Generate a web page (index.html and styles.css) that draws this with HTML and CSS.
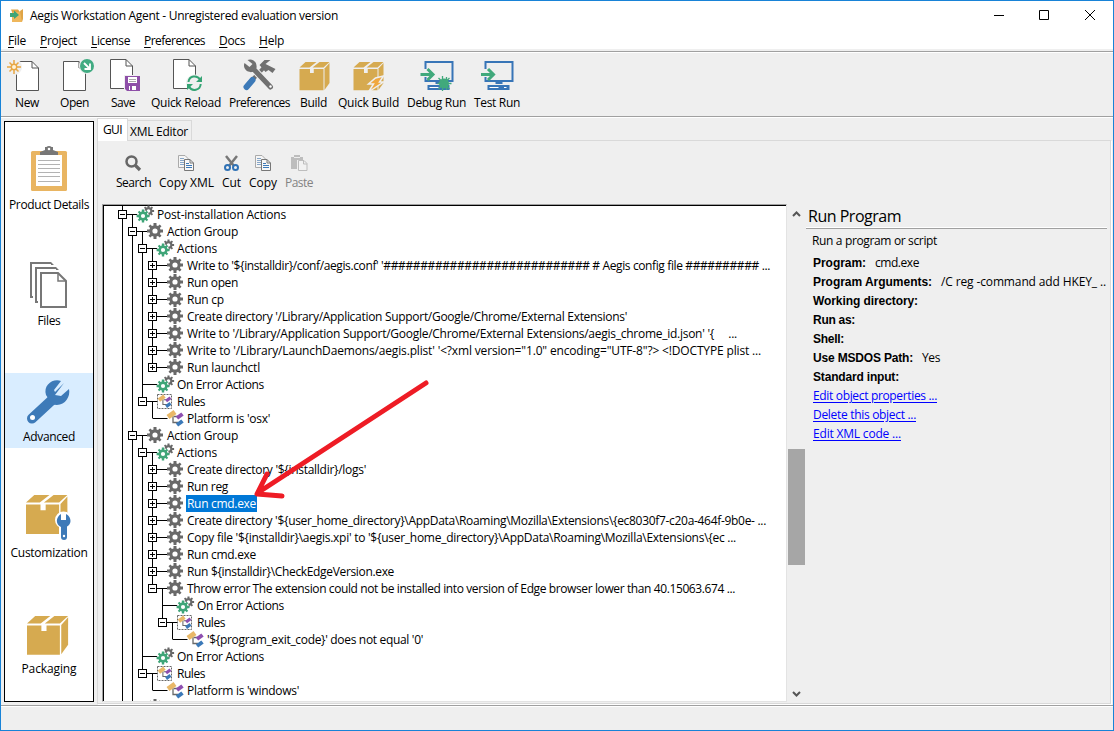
FILE: index.html
```html
<!DOCTYPE html>
<html lang="en">
<head>
<meta charset="utf-8">
<title>Aegis Workstation Agent</title>
<link rel="stylesheet" href="styles.css">
</head>
<body>
<svg class="defs" width="0" height="0">
  <defs>
    <g id="page"><path d="M.5 .5H16L22.500 7V29.500H.5Z" fill="#fff" stroke="#555"/><path d="M16 .5V7H22.500" fill="none" stroke="#555"/></g>
    <g id="box" fill="#d6aa50"><path d="M0 10H14V16H19V10H32V41H0Z" transform="scale(.75 .69)"/><path d="M0 5.500 6 0H17L10 5.500ZM13 5.500 20 0H30L24 5.500Z"/><path d="M25 6.500 30 1V21L25 28Z"/></g>
    <g id="gear" fill="#696969">
      <path fill-rule="evenodd" d="M-1.500 -8H1.500V-5.500L3 -4.900 4.700 -6.500 6.500 -4.700 4.900 -3 5.500 -1.500H8V1.500H5.500L4.900 3 6.500 4.700 4.700 6.500 3 4.900 1.500 5.500V8H-1.500V5.500L-3 4.900-4.700 6.500-6.500 4.700-4.900 3-5.500 1.500H-8V-1.500H-5.500L-4.900-3-6.500-4.700-4.700-6.500-3-4.900-1.500-5.500ZM2.600 0A2.600 2.600 0 1 0-2.600 0A2.600 2.600 0 1 0 2.600 0Z"/>
    </g>
    <g id="gear-green" fill="#3fa578">
      <path fill-rule="evenodd" d="M-1.500 -8H1.500V-5.500L3 -4.900 4.700 -6.500 6.500 -4.700 4.900 -3 5.500 -1.500H8V1.500H5.500L4.900 3 6.500 4.700 4.700 6.500 3 4.900 1.500 5.500V8H-1.500V5.500L-3 4.900-4.700 6.500-6.500 4.700-4.900 3-5.500 1.500H-8V-1.500H-5.500L-4.900-3-6.500-4.700-4.700-6.500-3-4.900-1.500-5.500ZM2.600 0A2.600 2.600 0 1 0-2.600 0A2.600 2.600 0 1 0 2.600 0Z"/>
    </g>
    <g id="gears"><use href="#gear" transform="translate(3.500 -3) scale(.7)"/><circle cx="-2" cy="2" r="6" fill="#fff"/><use href="#gear-green" transform="translate(-2 2) scale(.8)"/></g>
    <g id="rule"><path d="M-2 -2V4.500H3M-1 -1.500H3" fill="none" stroke="#696969" stroke-width="1.300"/><path d="M-7 -1 0 -6" stroke="#e9b868" stroke-width="5"/><path d="M2 0 7.500 -4" stroke="#8e4fb0" stroke-width="4"/><path d="M2 7 7.500 3" stroke="#3b79b8" stroke-width="4"/></g>
    <g id="rules"><rect x="-7.500" y="-6.500" width="14" height="14" fill="#fff" stroke="#666" stroke-dasharray="2 1"/><use href="#rule" transform="translate(-.5 0) scale(.8)"/></g>
    <g id="monitor"><path d="M1 8V1H28V20H1V16" fill="none" stroke="#3875b7" stroke-width="2"/><path d="M11 20H18V23H11ZM3 24H25V29H3Z" fill="#3875b7"/><path d="M5 26.500H14M19.500 26.500H22" stroke="#fff"/></g>
    <g id="run"><path d="M0 6.500H13M7 1 12.500 6.500 7 12" fill="none" stroke="#41a97c" stroke-width="3"/></g>
    <g id="wrench"><path d="M6 38.500 26 20" stroke="#3d7ab8" stroke-width="10" stroke-linecap="round"/><path d="M38 3 29 12 28 10 35 1C27-2 17 5 20 15L26 24C37 28 45 18 43 9L35 16 29 15Z" fill="#3d7ab8"/><circle cx="6.500" cy="37.500" r="2.500" fill="#fff"/></g>
    <g id="copy"><path d="M.5 .5H7L10.500 4V12.500H.5Z" fill="#f5f5f5" stroke="#aaa"/><path d="M2 3.500H6M2 5.500H8M2 7.500H6M2 9.500H6" stroke="#86a6c8"/><path d="M6.500 4.500H12L15.500 8V15.500H6.500Z" fill="#f8f8f8" stroke="#777"/><path d="M12 4.500V8H15.500" fill="none" stroke="#777"/><path d="M8 8.500H11M8 10.500H14M8 12.500H14" stroke="#3d7ab8"/></g>
  </defs>
</svg>

<div class="window">
  <header class="titlebar">
    <svg class="app-icon" width="16" height="16"><path d="M3 4H13V14H3Z" fill="#efb75c"/><path d="M2 1.500H9L11 4H3ZM11 3 14 1V11L13 14Z" fill="#dfa445"/><path d="M1 5H5V2.500L10 7 5 11V9H1Z" fill="#3fa578"/></svg>
    <span class="title" data-w="308">Aegis Workstation Agent - Unregistered evaluation version</span>
    <svg class="controls" width="104" height="12"><path d="M0 5.500H10M45.500 .5H54.500V9.500H45.500ZM91 0 101 10M101 0 91 10" fill="none" stroke="#000"/></svg>
  </header>
  <nav class="menubar">
    <span data-w="18"><u>F</u>ile</span><span data-w="37"><u>P</u>roject</span><span data-w="39"><u>L</u>icense</span><span data-w="61"><u>P</u>references</span><span data-w="26"><u>D</u>ocs</span><span data-w="25"><u>H</u>elp</span>
  </nav>

  <div class="toolbar">
    <div class="tool t-new"><svg viewBox="7 55 40 40"><use href="#page" x="16" y="61"/><g><circle cx="14" cy="67" r="8" fill="#efefef"/><path d="M14 60V74M7 67H21M9.500 62.500 18.500 71.500M18.500 62.500 9.500 71.500" stroke="#e8a743" stroke-width="1.500"/><circle cx="14" cy="67" r="2.700" fill="#fff3d8" stroke="#e8a743" stroke-width="1.400"/></g></svg><span data-w="24">New</span></div>
    <div class="tool t-open"><svg viewBox="54.500 55 40 40"><use href="#page" x="62.500" y="61"/><circle cx="86.500" cy="66" r="8" fill="#efefef"/><circle cx="86.500" cy="66" r="7" fill="#41ab82"/><path d="M83.500 63 88.500 68M89.500 63.500V69H84" fill="none" stroke="#fff" stroke-width="1.800"/></svg><span data-w="29">Open</span></div>
    <div class="tool t-save"><svg viewBox="103 55 40 40"><use href="#page" x="110" y="59"/><path d="M124 75H141V92H124Z" fill="#efefef"/><path d="M125 76H140V91H127L125 89Z" fill="#8e4fa8"/><path d="M128 77H137V83H128ZM129 86H136V90H129Z" fill="#fff"/><path d="M129 79.500H136M129 81.500H136" stroke="#aaa"/><path d="M130 86H132V90H130Z" fill="#8e4fa8"/></svg><span data-w="24">Save</span></div>
    <div class="tool t-reload"><svg viewBox="166 55 40 40"><use href="#page" x="173" y="59"/><circle cx="194.500" cy="83" r="8.500" fill="#efefef"/><path d="M188.500 82A6.200 6.200 0 0 1 200 79.500M200.700 84A6.200 6.200 0 0 1 189 86.500" fill="none" stroke="#35a474" stroke-width="2"/><path d="M202 76V82H196ZM187 90V84H193Z" fill="#35a474"/></svg><span data-w="70">Quick Reload</span></div>
    <div class="tool t-prefs"><svg viewBox="239.500 55 40 40"><path d="M246 86 263 68" stroke="#707070" stroke-width="4"/><path d="M246 87 252 80" stroke="#3d7ab8" stroke-width="6" stroke-linecap="round"/><path d="M259 65 264 60 270 60 265 64 275 69 272 73 268 70 265 72Z" fill="#707070"/><path d="M252 68 271 88" stroke="#efefef" stroke-width="7"/><path d="M253 69 270 87" stroke="#707070" stroke-width="5" stroke-linecap="round"/><path d="M247 60C251 58 257 61 256 68L252 72C246 73 242 68 244 63L249 67 252 64Z" fill="#707070"/><circle cx="270" cy="86.500" r="1.200" fill="#fff"/></svg><span data-w="61">Preferences</span></div>
    <div class="tool t-build"><svg viewBox="293.500 55 40 40"><use href="#box" x="299" y="62"/></svg><span data-w="27">Build</span></div>
    <div class="tool t-quick"><svg viewBox="348.500 55 40 40"><use href="#box" x="353" y="62"/><path d="M375 78 383 76 379 82H383L368 92 373 84H368Z" fill="#f0a83f" stroke="#efefef" stroke-width="1.500"/></svg><span data-w="61">Quick Build</span></div>
    <div class="tool t-debug"><svg viewBox="416.500 55 40 40"><use href="#monitor" x="424" y="61"/><use href="#run" x="420" y="68"/><circle cx="443.500" cy="83.500" r="5" fill="#41a97c"/><path d="M437 83.500H451M438 78 449 89M449 78 438 89M442 76V91M446 77V90" stroke="#41a97c" stroke-width="1.300"/></svg><span data-w="59">Debug Run</span></div>
    <div class="tool t-test"><svg viewBox="477 55 40 40"><use href="#monitor" x="484.500" y="61"/><use href="#run" x="481" y="68"/></svg><span data-w="46">Test Run</span></div>
  </div>

  <div class="workspace">
    <aside class="sidebar">
      <div class="side"><svg viewBox="26 143 46 52"><rect x="31" y="151" width="36" height="40" rx="1.500" fill="#e9b562"/><path d="M36 155H62V186H36Z" fill="#fff"/><path d="M38 160.500H60M38 164.500H60M38 168.500H60M38 172.500H60M38 176.500H60M38 181.500H60" stroke="#b3b3b3"/><path d="M40 155V152L45 150V147H53V150L58 152V155Z" fill="#777"/><circle cx="49" cy="149" r="2.200" fill="#fff" stroke="#777" stroke-width="1.800"/></svg><span data-w="80">Product Details</span></div>
      <div class="side"><svg viewBox="26 259 46 52"><path d="M51 263H31V297H33M56 268H36V302H38" fill="none" stroke="#777" stroke-width="2"/><path d="M51 262 54 265H51ZM56 267 59 270H56Z" fill="#777"/><path d="M41 273H58L66 281V307H41Z" fill="#fff" stroke="#777" stroke-width="2"/><path d="M58 273V281H66" fill="none" stroke="#777" stroke-width="1.500"/></svg><span data-w="23">Files</span></div>
      <div class="side active"><svg viewBox="26 375 46 52"><use href="#wrench" x="26" y="380"/></svg><span data-w="52">Advanced</span></div>
      <div class="side"><svg viewBox="26 491 46 52"><use href="#box" transform="translate(26 495) scale(1.380)"/><path d="M64 515V538" stroke="#fff" stroke-width="10"/><circle cx="63.500" cy="520" r="8.500" fill="#fff"/><path d="M64 525V537" stroke="#3d7ab8" stroke-width="6" stroke-linecap="round"/><path d="M61 514V520H66V514C72 517 72 525 66 527H61C55 524 56 517 61 514Z" fill="#3d7ab8"/><circle cx="64" cy="536" r="1.200" fill="#fff"/></svg><span data-w="77">Customization</span></div>
      <div class="side"><svg viewBox="26 607 46 52"><use href="#box" transform="translate(27 616) scale(1.370)"/></svg><span data-w="55">Packaging</span></div>
    </aside>

    <main class="notebook">
      <div class="tabs"><div class="tab current"><span data-w="19">GUI</span></div><div class="tab"><span data-w="58">XML Editor</span></div></div>
      <div class="pane">
        <div class="subbar">
          <div class="sub s-search"><svg viewBox="0 0 17 17"><circle cx="6.500" cy="6.500" r="5" fill="none" stroke="#666" stroke-width="2.500"/><path d="M10.500 10.500 15 15" stroke="#666" stroke-width="3.200"/></svg><span data-w="35">Search</span></div>
          <div class="sub s-xml"><svg viewBox="0 0 17 17"><use href="#copy"/></svg><span data-w="55">Copy XML</span></div>
          <div class="sub s-cut"><svg viewBox="0 0 17 17"><path d="M3 1 11 11M14 1 6 11" stroke="#777" stroke-width="2.500"/><circle cx="4.500" cy="12.500" r="2.500" fill="none" stroke="#3072b5" stroke-width="2"/><circle cx="12.500" cy="12.500" r="2.500" fill="none" stroke="#3072b5" stroke-width="2"/></svg><span data-w="19">Cut</span></div>
          <div class="sub s-copy"><svg viewBox="0 0 17 17"><use href="#copy"/></svg><span data-w="28">Copy</span></div>
          <div class="sub s-paste"><svg viewBox="0 0 17 17"><path d="M0 2H3V0H9V2H12V5H6V14H0Z" fill="#bdbdbd"/><path d="M3 2.500H9" stroke="#eee"/><path d="M7.500 5.500H13L16 8.500V15.500H7.500ZM12.500 5.500V9H16" fill="#f2f2f2" stroke="#bdbdbd"/></svg><span data-w="28">Paste</span></div>
        </div>
        <div class="split">
          <div class="tree" id="tree"></div>
          <div class="scroll"><svg width="9" height="7"><path d="M1 6 4.500 2.500 8 6" fill="none" stroke="#555" stroke-width="2"/></svg><div class="thumb"></div><svg width="9" height="7"><path d="M1 1 4.500 4.500 8 1" fill="none" stroke="#555" stroke-width="2"/></svg></div>
          <section class="details">
            <h1><span data-w="93">Run Program</span></h1>
            <p><span data-w="125">Run a program or script</span></p>
            <dl>
              <div><dt data-w="53">Program:</dt><dd data-w="44">cmd.exe</dd></div>
              <div><dt data-w="119">Program Arguments:</dt><dd data-w="165">/C reg -command add HKEY_ ..</dd></div>
              <div><dt data-w="105">Working directory:</dt></div>
              <div><dt data-w="42">Run as:</dt></div>
              <div><dt data-w="31">Shell:</dt></div>
              <div><dt data-w="100">Use MSDOS Path:</dt><dd data-w="18">Yes</dd></div>
              <div><dt data-w="86">Standard input:</dt></div>
            </dl>
            <div class="links"><a data-w="124">Edit object properties ...</a><a data-w="103">Delete this object ...</a><a data-w="88">Edit XML code ...</a></div>
          </section>
        </div>
      </div>
    </main>
  </div>
  <footer class="status"></footer>
  <svg class="pointer" width="180" height="126"><path d="M174 8 7 117M15 99 5 119 30 121" fill="none" stroke="#ee1c25" stroke-width="5" stroke-linecap="round" stroke-linejoin="round"/></svg>
</div>
<script src="app.js"></script>
</body>
</html>
```

FILE: styles.css
```css
* { box-sizing: border-box; }
body { margin: 0; font: 12px/16px "Open Sans", "Noto Sans", sans-serif; color: #000; overflow: hidden; }
svg { display: block; flex: none; overflow: visible; }
.defs { position: absolute; }
span, dt, dd, a { white-space: pre; }

.window { position: relative; display: flex; flex-direction: column; width: 1114px; height: 731px; border: 1px solid #1883d7; background: #efefef; }
.titlebar { display: flex; align-items: center; height: 30px; padding: 0 15px 0 8px; background: #fff; }
.app-icon { margin-right: 5px; }
.controls { margin-left: auto; }
.menubar { display: flex; gap: 14px; height: 18px; padding: 2px 7px 0; background: #fff; }
.menubar u { text-underline-offset: 2px; }

.toolbar { display: flex; height: 66px; margin-top: 2px; padding-left: 2px; border-top: 1px solid #a0a0a0; border-bottom: 1px solid #a0a0a0; box-shadow: inset 0 1px #fff, 0 1px #fff; }
.tool { display: flex; flex-direction: column; align-items: center; padding-top: 3px; }
.tool svg { width: 40px; height: 40px; }
.t-new { width: 48px; }
.t-open { width: 47px; }
.t-save { width: 50px; }
.t-reload { width: 76px; }
.t-prefs { width: 71px; }
.t-build { width: 37px; }
.t-quick { width: 73px; }
.t-debug { width: 63px; }
.t-test { width: 58px; }

.workspace { display: flex; height: 588px; padding: 0 2px 0 3px; }
.sidebar { display: flex; flex-direction: column; gap: 41px; width: 90px; height: 581px; margin: 4px 3px 0 0; padding-top: 19px; border: 1px solid #000; background: #fff; }
.side { display: flex; flex-direction: column; align-items: center; height: 75px; padding-top: 2px; }
.side svg { width: 46px; height: 52px; }
.side span { margin-top: 2px; }
.side.active { background: #d9edff; }

.notebook { display: flex; flex-direction: column; width: 1014px; margin-top: 1px; }
.tabs { display: flex; align-items: flex-end; height: 23px; margin-bottom: -1px; }
.tab { display: flex; align-items: center; height: 21px; padding: 2px 3px 0 2px; border: 1px solid #d9d9d9; border-left: 0; }
.tab.current { height: 23px; padding: 0 5px 1px; border-left: 1px solid #d9d9d9; border-bottom: 0; background: #fff; z-index: 1; }
.pane { height: 564px; padding: 0 3px 0 4px; border: 1px solid #d9d9d9; box-shadow: 1px 1px #fff; }
.subbar { display: flex; height: 63px; padding: 14px 0 0 10px; }
.sub { display: flex; flex-direction: column; align-items: center; gap: 3px; }
.sub svg { width: 17px; height: 17px; }
.s-search { width: 43px; }
.s-xml { width: 63px; }
.s-cut { width: 27px; }
.s-copy { width: 36px; }
.s-paste { width: 36px; color: #838383; }

.split { display: flex; height: 498px; }
.tree { width: 685px; overflow: hidden; background: #fff; border-style: solid; border-width: 1px; border-color: #a0a0a0 #e3e3e3 #e3e3e3 #a0a0a0; box-shadow: inset 1px 1px #000; padding: 1px 0 0 1px; }
.row { display: flex; height: 17px; }
.row span { line-height: 17px; }
.row.selected span { background: #0078d7; color: #fff; box-shadow: -1px 0 #0078d7, 1px 0 #0078d7; }
.scroll { display: flex; flex-direction: column; align-items: center; width: 17px; margin-left: 1px; padding: 6px 0 4px; }
.thumb { width: 17px; height: 116px; margin-top: 232px; margin-bottom: auto; background: #a6a6a6; }
.details { width: 301px; margin-left: 1px; }
h1 { margin: 0; height: 25px; padding-top: 2px; font-size: 16px; line-height: 20px; font-weight: 400; border-bottom: 1px solid #a0a0a0; box-shadow: inset 0 -1px #fff; padding-left: 2px; }
p { margin: 4px 0 0 6px; }
dl { margin: 4px 0 0 7px; }
dl div { display: flex; gap: 9px; height: 19px; align-items: center; }
dt { font: bold 12px/18px "Liberation Sans", Arial, sans-serif; }
dd { margin: 0; }
.links { display: flex; flex-direction: column; align-items: flex-start; gap: 3px; margin: 2px 0 0 7px; }
.links a { color: #00f; text-decoration: underline; text-underline-offset: 2px; }
.status { height: 25px; border-top: 1px solid #a0a0a0; box-shadow: inset 0 1px #fff; }
.pointer { position: absolute; left: 251px; top: 374px; }
```

FILE: app.js
```js
// depth, icon, toggle, has a following sibling, text, label width
const rows = [
  [0, 'gears', '-', 1, "Post-installation Actions", 129],
  [1, 'gear', '-', 1, "Action Group", 71],
  [2, 'gears', '-', 1, "Actions", 40],
  [3, 'gear', '+', 1, "Write to '${installdir}/conf/aegis.conf' '############################ # Aegis config file ########## ...", 583],
  [3, 'gear', '+', 1, "Run open", 51],
  [3, 'gear', '+', 1, "Run cp", 37],
  [3, 'gear', '+', 1, "Create directory '/Library/Application Support/Google/Chrome/External Extensions'", 440],
  [3, 'gear', '+', 1, "Write to '/Library/Application Support/Google/Chrome/External Extensions/aegis_chrome_id.json' '{     ...", 550],
  [3, 'gear', '+', 1, "Write to '/Library/LaunchDaemons/aegis.plist' '<?xml version=\"1.0\" encoding=\"UTF-8\"?> <!DOCTYPE plist ...", 574],
  [3, 'gear', '+', 0, "Run launchctl", 73],
  [2, 'gears', '', 1, "On Error Actions", 87],
  [2, 'rules', '-', 0, "Rules", 28],
  [3, 'rule', '', 0, "Platform is 'osx'", 83],
  [1, 'gear', '-', 1, "Action Group", 71],
  [2, 'gears', '-', 1, "Actions", 40],
  [3, 'gear', '+', 1, "Create directory '${installdir}/logs'", 179],
  [3, 'gear', '+', 1, "Run reg", 41],
  [3, 'gear', '+', 1, "Run cmd.exe", 69],
  [3, 'gear', '+', 1, "Create directory '${user_home_directory}\\AppData\\Roaming\\Mozilla\\Extensions\\{ec8030f7-c20a-464f-9b0e- ...", 579],
  [3, 'gear', '+', 1, "Copy file '${installdir}\\aegis.xpi' to '${user_home_directory}\\AppData\\Roaming\\Mozilla\\Extensions\\{ec ...", 549],
  [3, 'gear', '+', 1, "Run cmd.exe", 69],
  [3, 'gear', '+', 1, "Run ${installdir}\\CheckEdgeVersion.exe", 207],
  [3, 'gear', '-', 0, "Throw error The extension could not be installed into version of Edge browser lower than 40.15063.674 ...", 548],
  [4, 'gears', '', 1, "On Error Actions", 87],
  [4, 'rules', '-', 0, "Rules", 28],
  [5, 'rule', '', 0, "'${program_exit_code}' does not equal '0'", 216],
  [2, 'gears', '', 1, "On Error Actions", 87],
  [2, 'rules', '-', 0, "Rules", 28],
  [3, 'rule', '', 0, "Platform is 'windows'", 112],
  [1, 'gear', '+', 1, "", 0]
];

const tree = document.getElementById('tree');
const open = [];
rows.forEach(([depth, icon, toggle, next, text, width], index) => {
  const x = 18.5 + depth * 10;
  let lines = '';
  for (let d = 0; d < depth; d++) if (open[d]) lines += `M${18.5 + d * 10} 0V17`;
  lines += `M${x} 0V${next ? 17 : 8}M${x} 8.5H${x + 15}`;
  if (toggle === '-') lines += `M${x + 10} 8.5V17`;
  open[depth] = next;
  const box = toggle
    ? `<rect x="${x - 4}" y="4.5" width="8" height="8" fill="#fff" stroke="#000"/><path d="M${x - 2.5} 8.5H${x + 2.5}${toggle === '+' ? `M${x} 6V11` : ''}" stroke="#000"/>`
    : '';
  const row = document.createElement('div');
  row.className = index === 17 ? 'row selected' : 'row';
  row.innerHTML = `<svg width="${x + 34.5}" height="17"><path d="${lines}" fill="none" stroke="#000"/>${box}<use href="#${icon}" x="${x + 22.5}" y="8"/></svg>`;
  const label = document.createElement('span');
  label.textContent = text;
  label.dataset.w = width;
  row.appendChild(label);
  tree.appendChild(row);
});

// Track each label to its nominal width.
document.querySelectorAll('[data-w]').forEach(el => {
  const count = el.textContent.length;
  if (!count) return;
  const range = document.createRange();
  range.selectNodeContents(el);
  const natural = range.getBoundingClientRect().width;
  el.style.letterSpacing = (el.dataset.w - natural) / count + 'px';
});
```
